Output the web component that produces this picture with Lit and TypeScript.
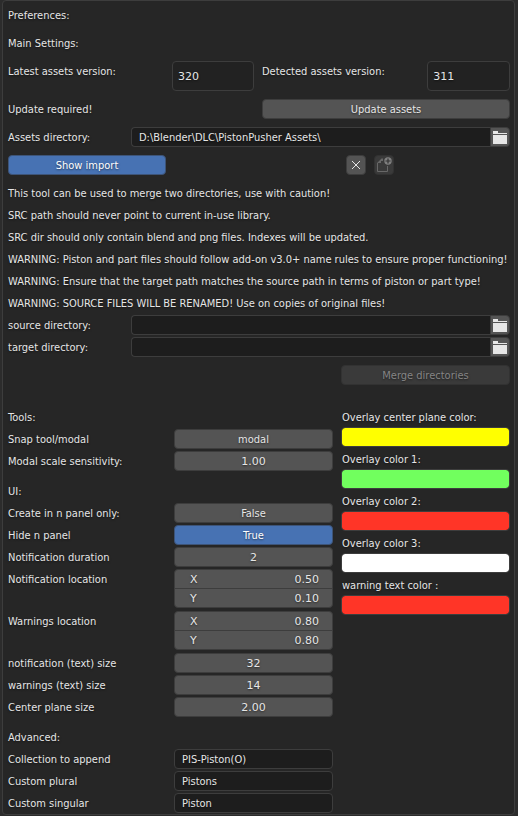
import { LitElement, html, css, svg, nothing } from "lit";
import { customElement, property, state } from "lit/decorators.js";
import { classMap } from "lit/directives/class-map.js";

const widgetStyles = css`
  * {
    box-sizing: border-box;
  }
  button,
  input {
    font: inherit;
    color: inherit;
    text-shadow: inherit;
    margin: 0;
    min-width: 0;
    width: 100%;
    height: 20px;
    border: 1px solid #3d3d3d;
    border-radius: 4px;
    outline: none;
  }
  button {
    display: flex;
    align-items: center;
    justify-content: center;
    padding: 2px 0 0;
    background: #545454;
  }
  button.icon {
    padding: 0;
  }
  button.on {
    background: #4772b3;
    border-color: #3d5478;
    color: #ffffff;
  }
  button:disabled {
    background: #3a3a3a;
    border-color: #323232;
    color: #858585;
  }
  input {
    padding: 2px 7px 0;
    background: #1d1d1d;
  }
  .number {
    font-family: "DejaVu Sans", sans-serif;
  }
  input.number {
    background: #545454;
    text-align: center;
  }
  label,
  .label {
    display: block;
    margin: 0;
    padding-top: 2px;
    font: inherit;
    line-height: 18px;
    white-space: nowrap;
  }
`;

const folderIcon = svg`
  <svg width="14" height="14" viewBox="0 0 14 14" aria-hidden="true">
    <path d="M0 1h5v2h9v1H0z M0 5h14v9H0z" fill="#e6e6e6"></path>
  </svg>
`;

const crossIcon = svg`
  <svg width="10" height="10" viewBox="0 0 10 10" aria-hidden="true">
    <path d="M1 1l8 8M9 1l-8 8" stroke="#e6e6e6" fill="none"></path>
  </svg>
`;

const newFileIcon = svg`
  <svg width="16" height="16" viewBox="0 0 16 16" aria-hidden="true">
    <path d="M1.500 6V14.500H11.500V9" stroke="#686868" fill="none"></path>
    <path d="M1 6L5.500 1.500H7V4H5V6z" fill="#686868"></path>
    <circle cx="12" cy="4" r="3.700" fill="#808080"></circle>
    <path d="M12 1.500v5M9.500 4h5" stroke="#333333" stroke-width="1.200"></path>
  </svg>
`;

@customElement("path-field")
class PathField extends LitElement {
  static styles = [
    widgetStyles,
    css`
      :host {
        display: grid;
        grid-template-columns: 123fr 379fr;
      }
      .box {
        display: flex;
      }
      .box input {
        flex: 1;
        border-right: 0;
        border-radius: 4px 0 0 4px;
      }
      .box button {
        flex: none;
        width: 20px;
        border-radius: 0 4px 4px 0;
      }
    `,
  ];

  @property() label = "";
  @property() value = "";

  render() {
    return html`
      <label for="path">${this.label}</label>
      <div class="box">
        <input id="path" type="text" .value=${this.value} />
        <button type="button" class="icon" aria-label="Browse">${folderIcon}</button>
      </div>
    `;
  }
}

type Kind = "toggle" | "number" | "text";

@customElement("setting-row")
class SettingRow extends LitElement {
  static styles = [
    widgetStyles,
    css`
      :host {
        display: grid;
        grid-template-columns: 158fr 159fr;
        column-gap: 8px;
      }
    `,
  ];

  @property() label = "";
  @property() value = "";
  @property() kind: Kind = "text";
  @property({ type: Boolean }) on = false;

  render() {
    return html`
      <label for="control">${this.label}</label>
      ${this.kind === "toggle"
        ? html`<button id="control" type="button" class=${classMap({ on: this.on })}>${this.value}</button>`
        : html`<input id="control" type="text" class=${classMap({ number: this.kind === "number" })} .value=${this.value} />`}
    `;
  }
}

@customElement("location-row")
class LocationRow extends LitElement {
  static styles = [
    widgetStyles,
    css`
      :host {
        display: grid;
        grid-template-columns: 158fr 159fr;
        column-gap: 8px;
        padding-bottom: 1px;
      }
      .pair {
        border: 1px solid #3d3d3d;
        border-radius: 4px;
        background: #545454;
        overflow: hidden;
      }
      .axis {
        display: flex;
        height: 18px;
        padding: 0 13px 0 15px;
      }
      .axis + .axis {
        height: 19px;
        border-top: 1px solid #3d3d3d;
      }
      .axis label {
        line-height: 16px;
      }
      .axis input {
        flex: 1;
        height: 18px;
        padding: 2px 0 0;
        border: 0;
        background: none;
        text-align: right;
      }
    `,
  ];

  @property() label = "";
  @property() x = "";
  @property() y = "";

  render() {
    return html`
      <span class="label" id="name">${this.label}</span>
      <div class="pair number" role="group" aria-labelledby="name">
        <div class="axis"><label for="x">X</label><input id="x" type="text" .value=${this.x} /></div>
        <div class="axis"><label for="y">Y</label><input id="y" type="text" .value=${this.y} /></div>
      </div>
    `;
  }
}

@customElement("color-field")
class ColorField extends LitElement {
  static styles = [
    widgetStyles,
    css`
      :host {
        display: block;
      }
      label {
        padding-left: 1px;
      }
      input {
        display: block;
        padding: 0;
        appearance: none;
        overflow: hidden;
      }
      input::-webkit-color-swatch-wrapper {
        padding: 0;
      }
      input::-webkit-color-swatch {
        border: 0;
        border-radius: 3px;
      }
    `,
  ];

  @property() label = "";
  @property() value = "#000000";

  render() {
    return html`
      <label for="color">${this.label}</label>
      <input id="color" type="color" .value=${this.value} />
    `;
  }
}

const notes = [
  "This tool can be used to merge two directories, use with caution!",
  "SRC path should never point to current in-use library.",
  "SRC dir should only contain blend and png files. Indexes will be updated.",
  "WARNING: Piston and part files should follow add-on v3.0+ name rules to ensure proper functioning!",
  "WARNING: Ensure that the target path matches the source path in terms of piston or part type!",
  "WARNING: SOURCE FILES WILL BE RENAMED! Use on copies of original files!",
];

const overlays = [
  { label: "Overlay center plane color:", value: "#ffff00" },
  { label: "Overlay color 1:", value: "#71ff5e" },
  { label: "Overlay color 2:", value: "#ff3527" },
  { label: "Overlay color 3:", value: "#ffffff" },
  { label: "warning text color :", value: "#ff3527" },
];

@customElement("app-root")
class AppRoot extends LitElement {
  static styles = [
    widgetStyles,
    css`
      :host {
        display: block;
        min-height: 100vh;
        padding: 0 3px 1px 2px;
        background: #2c2c2c;
        color: #e6e6e6;
        font: 11px/20px "DejaVu Sans Condensed", "DejaVu Sans", sans-serif;
        text-shadow: 0 1px 2px rgba(0, 0, 0, 0.5);
        box-sizing: border-box;
      }
      .panel {
        display: flex;
        flex-direction: column;
        gap: 8px;
        padding: 4px 4px 1px 5px;
        border: 1px solid #3d3d3d;
        border-radius: 4px;
        background: #262626;
      }
      .halves {
        display: grid;
        grid-template-columns: 246fr 248fr;
        column-gap: 8px;
      }
      .version {
        display: grid;
        grid-template-columns: 2fr 1fr;
      }
      .version input.number {
        height: 30px;
        padding: 0 5px;
        background: #222222;
        text-align: left;
      }
      .thirds {
        display: grid;
        grid-template-columns: 158fr 159fr 169fr;
        column-gap: 8px;
      }
      .third {
        grid-column: 3;
      }
      .icons {
        display: flex;
        gap: 8px;
        padding-left: 5px;
      }
      .icons button {
        width: 20px;
      }
      .group {
        display: flex;
        flex-direction: column;
        gap: 2px;
      }
      .section + .section {
        margin-top: 8px;
      }
      .settings {
        display: grid;
        grid-template-columns: 325fr 169fr;
        column-gap: 8px;
        padding-top: 14px;
      }
    `,
  ];

  @state() private importShown = true;

  render() {
    return html`
      <main class="panel">
        <h1 class="label">Preferences:</h1>
        <h2 class="label">Main Settings:</h2>
        <div class="halves">
          <div class="version">
            <label for="latest">Latest assets version:</label>
            <input id="latest" class="number" type="text" value="320" />
          </div>
          <div class="version">
            <label for="detected">Detected assets version:</label>
            <input id="detected" class="number" type="text" value="311" />
          </div>
        </div>
        <div class="halves">
          <span class="label">Update required!</span>
          <button type="button">Update assets</button>
        </div>
        <path-field label="Assets directory:" value="D:\\Blender\\DLC\\PistonPusher Assets\\"></path-field>
        <div class="thirds">
          <button
            type="button"
            class=${classMap({ on: this.importShown })}
            @click=${() => (this.importShown = !this.importShown)}
          >
            Show import
          </button>
          <div class="third icons">
            <button type="button" class="icon" aria-label="Remove">${crossIcon}</button>
            <button type="button" class="icon" aria-label="Add file" disabled>${newFileIcon}</button>
          </div>
        </div>
        ${this.importShown
          ? html`
              <div class="group">
                ${notes.map((note) => html`<p class="label">${note}</p>`)}
                <path-field label="source directory:"></path-field>
                <path-field label="target directory:"></path-field>
              </div>
              <div class="thirds">
                <button type="button" class="third" disabled>Merge directories</button>
              </div>
            `
          : nothing}
        <div class="settings">
          <div class="group">
            <section class="group section">
              <h2 class="label">Tools:</h2>
              <setting-row label="Snap tool/modal" kind="toggle" value="modal"></setting-row>
              <setting-row label="Modal scale sensitivity:" kind="number" value="1.00"></setting-row>
            </section>
            <section class="group section">
              <h2 class="label">UI:</h2>
              <setting-row label="Create in n panel only:" kind="toggle" value="False"></setting-row>
              <setting-row label="Hide n panel" kind="toggle" value="True" on></setting-row>
              <setting-row label="Notification duration" kind="number" value="2"></setting-row>
              <location-row label="Notification location" x="0.50" y="0.10"></location-row>
              <location-row label="Warnings location" x="0.80" y="0.80"></location-row>
              <setting-row label="notification (text) size" kind="number" value="32"></setting-row>
              <setting-row label="warnings (text) size" kind="number" value="14"></setting-row>
              <setting-row label="Center plane size" kind="number" value="2.00"></setting-row>
            </section>
            <section class="group section">
              <h2 class="label">Advanced:</h2>
              <setting-row label="Collection to append" value="PIS-Piston(O)"></setting-row>
              <setting-row label="Custom plural" value="Pistons"></setting-row>
              <setting-row label="Custom singular" value="Piston"></setting-row>
            </section>
          </div>
          <div class="group">
            ${overlays.map((o) => html`<color-field label=${o.label} value=${o.value}></color-field>`)}
          </div>
        </div>
      </main>
    `;
  }
}
